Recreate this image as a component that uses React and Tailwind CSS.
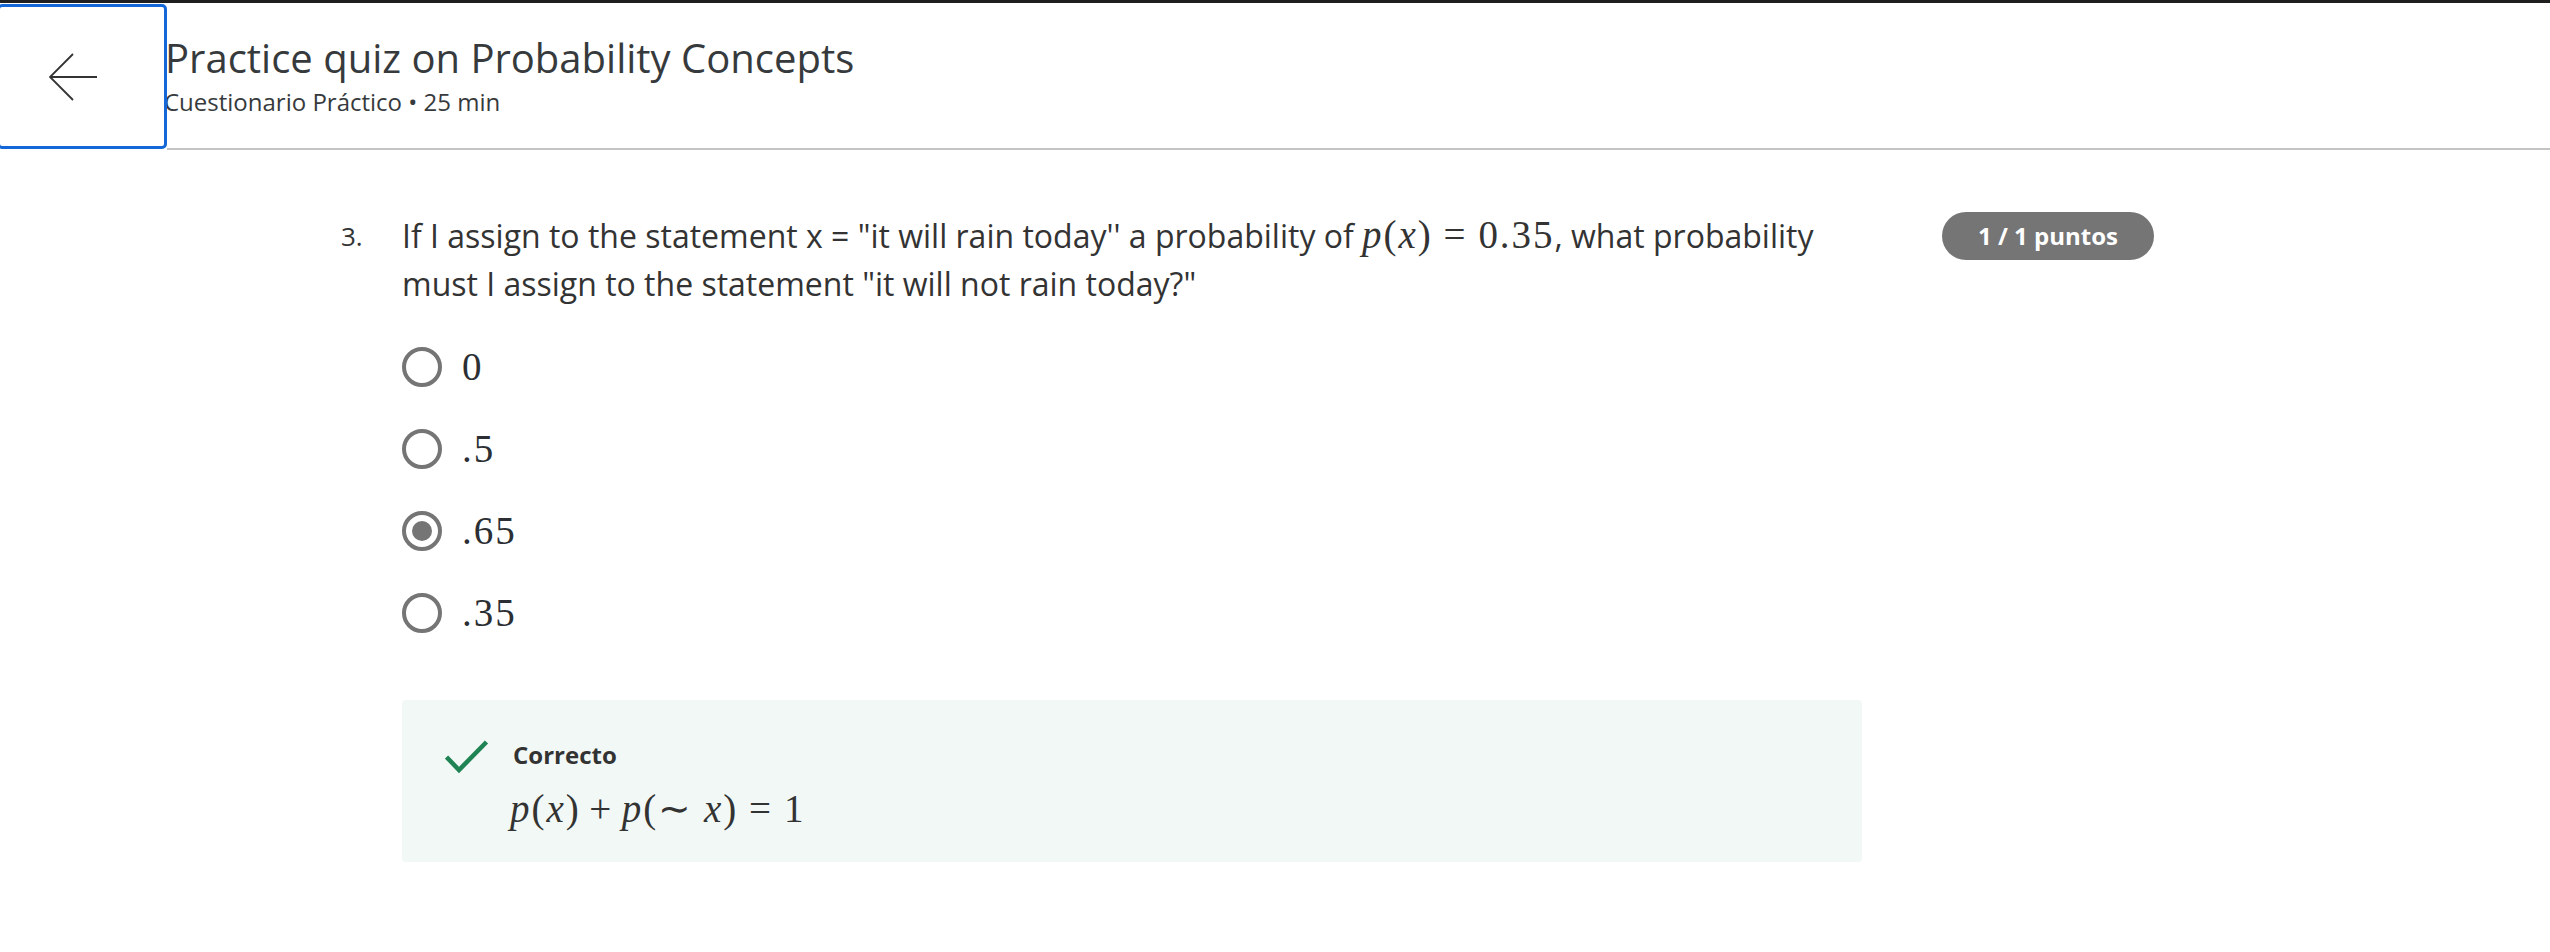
import React from "react";

const options = [
  { label: "0", selected: false },
  { label: ".5", selected: false },
  { label: ".65", selected: true },
  { label: ".35", selected: false },
];

function BackArrow() {
  return (
    <svg width="50" height="48" viewBox="0 0 50 48" fill="none" stroke="#333" strokeWidth="1.8">
      <path d="M1 24 H48" />
      <path d="M24 1 L1 24 L24 47" />
    </svg>
  );
}

function Check() {
  return (
    <svg width="44" height="34" viewBox="0 0 44 34" fill="none" stroke="#1f8354" strokeWidth="4.5">
      <path d="M1.5 17 L14 30 L41.5 2" />
    </svg>
  );
}

function Radio({ selected }) {
  return (
    <span className="flex h-[40px] w-[40px] shrink-0 items-center justify-center rounded-full border-[4px] border-[#757575]">
      {selected && <span className="h-[20px] w-[20px] rounded-full bg-[#757575]" />}
    </span>
  );
}

const math = "font-['Liberation_Serif',serif] text-[39px] leading-[40px] tracking-[0.05em]";

export default function App() {
  return (
    <div className="min-h-screen bg-white font-['Open_Sans',sans-serif] text-[#333]">
      <div className="h-[3px] bg-[#1f1f1f]" />

      {/* header */}
      <div className="flex h-[147px]">
        <button className="relative z-10 -ml-[3px] mb-[1px] mt-[1px] flex w-[170px] items-center rounded-[5px] border-[3px] border-[#1467d6] bg-white pl-[49px]">
          <BackArrow />
        </button>
        <div className="flex flex-1 flex-col justify-center border-b-2 border-[#c4c4c4]">
          <h1 className="-ml-[2px] text-[40px] leading-[48px] text-[#373a3c]">Practice quiz on Probability Concepts</h1>
          <p className="-ml-[3px] mt-[4px] text-[24px] leading-[32px] text-[#373a3c]">Cuestionario Práctico • 25 min</p>
        </div>
      </div>

      {/* question */}
      <div className="flex pl-[341px] pt-[62px]">
        <div className="w-[61px] text-[26px] leading-[48px]">3.</div>
        <div className="w-[1460px]">
          <p className="text-[32px] leading-[48px]">
            If I assign to the statement x = "it will rain today'' a probability of{" "}
            <span className={math}>
              <i>p</i>(<i>x</i>)<span className="mx-[0.28em]">=</span>0.35
            </span>
            , what probability must I assign to the statement "it will not rain today?"
          </p>

          <div className="mt-[18px] flex flex-col">
            {options.map((o) => (
              <label key={o.label} className="flex h-[82px] items-center gap-[20px]">
                <Radio selected={o.selected} />
                <span className={`${math} text-[#2b2f33]`}>{o.label}</span>
              </label>
            ))}
          </div>

          <div className="mt-[46px] flex h-[162px] gap-[24px] rounded-[4px] bg-[#f2f8f5] pl-[43px] pt-[37px]">
            <div className="pt-[3px]">
              <Check />
            </div>
            <div>
              <div className="text-[24px] font-bold leading-[36px]">Correcto</div>
              <div className={`${math} mt-[16px] -ml-[3px]`}>
                <i>p</i>(<i>x</i>)<span className="mx-[0.22em]">+</span>
                <i>p</i>(<span className="mr-[0.28em]">∼</span><i>x</i>)<span className="mx-[0.28em]">=</span>1
              </div>
            </div>
          </div>
        </div>

        <div className="ml-[80px]">
          <span className="inline-flex h-[48px] w-[212px] items-center justify-center rounded-full bg-[#757575] text-[24px] font-bold text-white">
            1 / 1 puntos
          </span>
        </div>
      </div>
    </div>
  );
}
